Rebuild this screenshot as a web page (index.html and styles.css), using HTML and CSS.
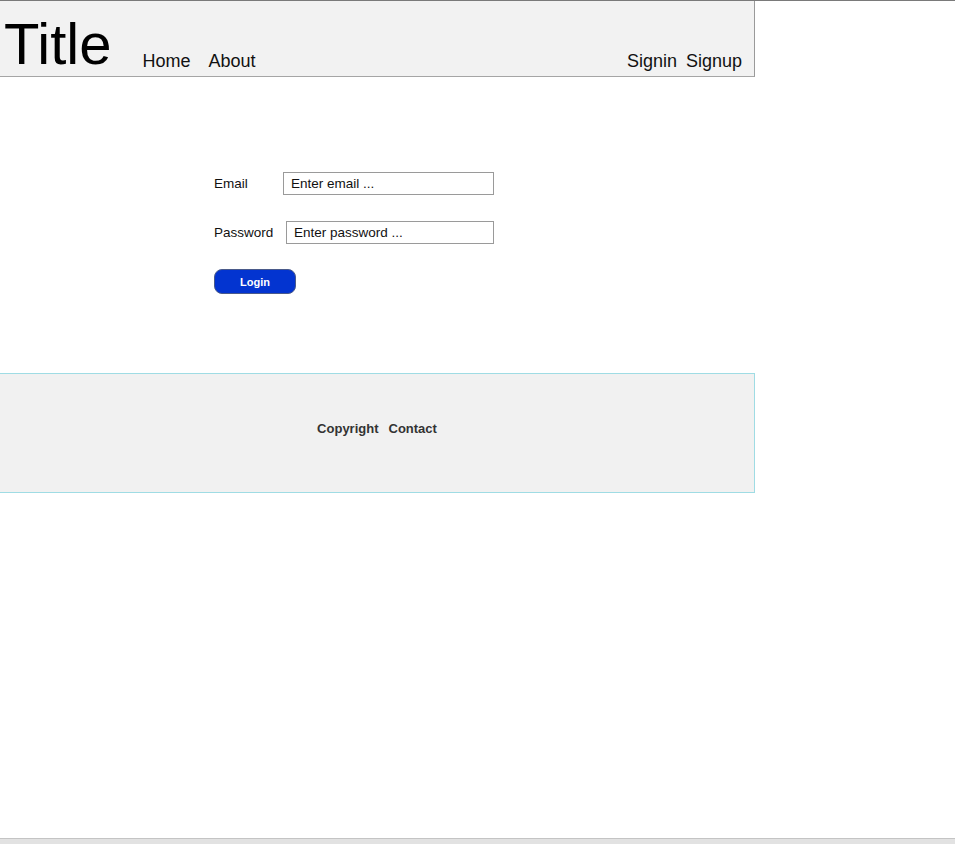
FILE: index.html
```html
<!DOCTYPE html>
<html lang="en">
<head>
<meta charset="utf-8">
<title>Title</title>
<link rel="stylesheet" href="styles.css">
</head>
<body>
<header class="header">
  <h1 class="title">Title</h1>
  <nav class="nav nav-left">
    <a href="#">Home</a>
    <a href="#">About</a>
  </nav>
  <nav class="nav nav-right">
    <a href="#">Signin</a>
    <a href="#">Signup</a>
  </nav>
</header>
<main class="main">
  <form class="form">
    <div class="row">
      <label class="label" for="email">Email</label>
      <input class="input input-email" id="email" type="text" placeholder="Enter email ...">
    </div>
    <div class="row">
      <label class="label" for="password">Password</label>
      <input class="input input-password" id="password" type="password" placeholder="Enter password ...">
    </div>
    <button class="btn" type="button">Login</button>
  </form>
</main>
<footer class="footer">
  <span>Copyright</span>
  <span>Contact</span>
</footer>
<div class="scrollbar"></div>
</body>
</html>
```
FILE: styles.css
```css
html, body {
  margin: 0;
  padding: 0;
  background: #ffffff;
}
body {
  border-top: 1px solid #7a7a7a;
  font-family: "Liberation Sans", Arial, sans-serif;
  color: #111;
}
.header {
  box-sizing: border-box;
  width: 755px;
  height: 76px;
  background: #f2f2f2;
  border-right: 1px solid #9a9a9a;
  border-bottom: 1px solid #a5a5a5;
  display: flex;
  align-items: flex-end;
  padding: 0 12px 3px 4px;
}
.title {
  margin: 0;
  font-size: 58px;
  line-height: 58px;
  font-weight: normal;
  color: #000;
}
.nav {
  display: flex;
  font-size: 18px;
  line-height: 18px;
  margin-bottom: 3px;
}
.nav a {
  color: #111;
  text-decoration: none;
}
.nav-left {
  margin-left: 31px;
  gap: 18px;
}
.nav-right {
  margin-left: auto;
  gap: 9px;
}
.main {
  padding: 95px 0 79px 214px;
}
.form {
  display: flex;
  flex-direction: column;
  align-items: flex-start;
}
.row {
  width: 280px;
  display: flex;
  justify-content: space-between;
  align-items: center;
  margin-bottom: 26px;
}
.row + .row {
  margin-bottom: 25px;
}
.label {
  font-size: 13.5px;
  color: #111;
}
.input {
  box-sizing: border-box;
  height: 23px;
  border: 1px solid #9a9a9a;
  border-radius: 0;
  padding: 0 0 0 7px;
  margin: 0;
  font-family: "Liberation Sans", Arial, sans-serif;
  font-size: 13.5px;
  color: #111;
  background: #fff;
  outline: none;
}
.input::placeholder {
  color: #111;
  opacity: 1;
}
.input-email {
  width: 211px;
}
.input-password {
  width: 208px;
}
.btn {
  box-sizing: border-box;
  width: 82px;
  height: 25px;
  margin: 0;
  background: #0334d0;
  border: 1px solid #4a5a8a;
  border-radius: 8px;
  color: #fff;
  font-family: "Liberation Sans", Arial, sans-serif;
  font-weight: bold;
  font-size: 11px;
  padding: 0;
}
.footer {
  box-sizing: border-box;
  width: 755px;
  height: 120px;
  padding-bottom: 10px;
  background: #f1f1f1;
  border: 1px solid #9fdce4;
  border-left: none;
  display: flex;
  justify-content: center;
  align-items: center;
  gap: 10px;
  font-size: 13px;
  font-weight: bold;
  color: #333;
}
.scrollbar {
  position: fixed;
  left: 0;
  right: 0;
  bottom: 0;
  height: 5px;
  background: #e2e2e2;
  border-top: 1px solid #c4c4c4;
}
```
